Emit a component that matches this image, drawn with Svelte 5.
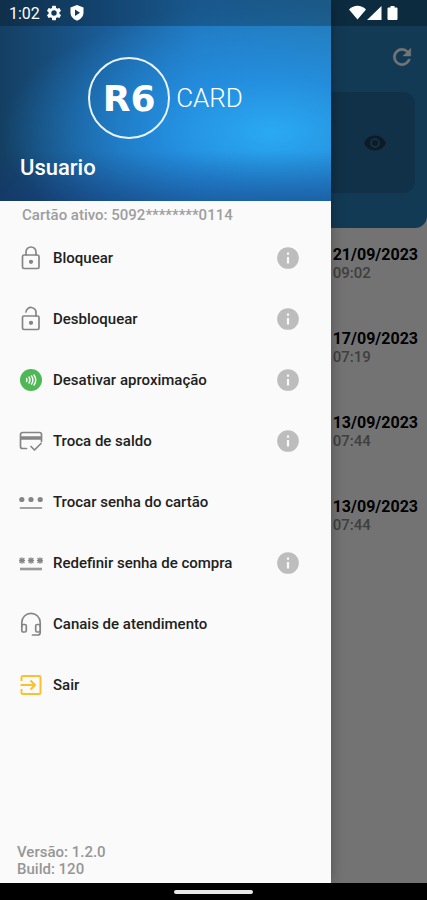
<script>
    const items = [
        { label: 'Bloquear', icon: 'lock', info: true },
        { label: 'Desbloquear', icon: 'unlock', info: true },
        { label: 'Desativar aproximação', icon: 'nfc', info: true },
        { label: 'Troca de saldo', icon: 'card', info: true },
        { label: 'Trocar senha do cartão', icon: 'password', info: false },
        { label: 'Redefinir senha de compra', icon: 'reset', info: true },
        { label: 'Canais de atendimento', icon: 'headset', info: false },
        { label: 'Sair', icon: 'exit', info: false }
    ];

    const history = [
        { date: '21/09/2023', time: '09:02' },
        { date: '17/09/2023', time: '07:19' },
        { date: '13/09/2023', time: '07:44' },
        { date: '13/09/2023', time: '07:44' }
    ];
</script>

<div class="app">
    <div class="stage">
        <main class="home">
            <header class="top">
                <button class="icon-btn refresh" aria-label="Atualizar">
                    <svg width="26" height="26" viewBox="0 0 24 24" fill="#fff">
                        <path d="M17.65 6.35A7.96 7.96 0 0 0 12 4a8 8 0 1 0 7.73 10h-2.08A6 6 0 1 1 12 6c1.66 0 3.14.69 4.22 1.78L13 11h7V4z" stroke="#fff" stroke-width=".5" />
                    </svg>
                </button>
                <div class="balance">
                    <button class="icon-btn" aria-label="Mostrar saldo">
                        <svg width="24" height="24" viewBox="0 0 24 24" fill="#1c3c50">
                            <path d="M12 4.500C7 4.500 2.730 7.610 1 12c1.730 4.390 6 7.500 11 7.500s9.270-3.110 11-7.500c-1.730-4.390-6-7.500-11-7.500zM12 17a5 5 0 1 1 0-10 5 5 0 0 1 0 10zm0-8a3 3 0 1 0 0 6 3 3 0 0 0 0-6z" />
                        </svg>
                    </button>
                </div>
            </header>
            <ul class="history">
                {#each history as row}
                    <li>
                        <div>
                            <strong>{row.date}</strong>
                            <span>{row.time}</span>
                        </div>
                    </li>
                {/each}
            </ul>
        </main>

        <div class="scrim"></div>

        <aside class="drawer">
            <div class="cover">
                <div class="logo">
                    <span class="ring">R6</span>
                    <span class="word">CARD</span>
                </div>
                <h1>Usuario</h1>
            </div>
            <p class="active-card">Cartão ativo: 5092********0114</p>
            <nav>
                {#each items as item}
                    <div class="row">
                        <button class="item">
                            <svg width="24" height="26" viewBox="0 0 24 26" fill="none" stroke="#858585" stroke-width="1.700" stroke-linecap="round" stroke-linejoin="round">
                                {#if item.icon === 'lock'}
                                    <rect x="3.500" y="10" width="16.500" height="13.500" rx="1.500" />
                                    <path d="M7 10V7a5 5 0 0 1 10 0v3" />
                                    <circle cx="12" cy="16.800" r="1.300" fill="#858585" />
                                {:else if item.icon === 'unlock'}
                                    <rect x="3.500" y="10" width="16.500" height="13.500" rx="1.500" />
                                    <path d="M7 6a5 5 0 0 1 10 1v3" />
                                    <circle cx="12" cy="16.800" r="1.300" fill="#858585" />
                                {:else if item.icon === 'nfc'}
                                    <circle cx="12" cy="13" r="11" fill="#4fb856" stroke="none" />
                                    <path d="M7.500 11.500q1 1.500 0 3M10 10q2 3 0 6M12.500 9q2.800 4 0 8M15 8q3.500 5 0 10" stroke="#fff" stroke-width="1.400" />
                                {:else if item.icon === 'card'}
                                    <path d="M7.500 20.500H3.500a2 2 0 0 1-2-2V6.500a2 2 0 0 1 2-2h17a2 2 0 0 1 2 2v7" />
                                    <path d="M2 10h20.500" stroke-width="3.500" stroke-linecap="butt" />
                                    <path d="M12 18.500l3.500 3.500 6.500-6.500" />
                                {:else if item.icon === 'password'}
                                    <g fill="#858585" stroke="none">
                                        <circle cx="2.800" cy="10.500" r="2.600" />
                                        <circle cx="12" cy="10.500" r="2.600" />
                                        <circle cx="21.200" cy="10.500" r="2.600" />
                                    </g>
                                    <path d="M1.500 19h21" />
                                {:else if item.icon === 'reset'}
                                    <path d="M1 8.500l4 4M5 8.500l-4 4M3 7.800v5.400M.5 10.500h5M10 8.500l4 4M14 8.500l-4 4M12 7.800v5.400M9.500 10.500h5M19 8.500l4 4M23 8.500l-4 4M21 7.800v5.400M18.500 10.500h5" stroke-width="1.300" />
                                    <path d="M1 19h22" stroke="#9a9a9a" stroke-width="2.600" stroke-linecap="butt" />
                                {:else if item.icon === 'headset'}
                                    <path d="M2.800 16V11.500a9.200 9.200 0 0 1 18.400 0V16" />
                                    <rect x="2.800" y="13.500" width="4.500" height="7.500" rx="1.500" />
                                    <rect x="16.700" y="13.500" width="4.500" height="7.500" rx="1.500" />
                                    <path d="M21.200 19v2.500a2.500 2.500 0 0 1-2.500 2.500H13.500" />
                                {:else}
                                    <path d="M2.500 9V5.500a1.500 1.500 0 0 1 1.500-1.500h16a1.500 1.500 0 0 1 1.500 1.500v15a1.500 1.500 0 0 1-1.500 1.500H4a1.500 1.500 0 0 1-1.500-1.500V17M1.500 13h14M11.500 8.500l4.500 4.500-4.500 4.500" stroke="#fbc02d" stroke-width="2" stroke-linecap="butt" />
                                {/if}
                            </svg>
                            {item.label}
                        </button>
                        {#if item.info}
                            <button class="icon-btn" aria-label="Informações: {item.label}">
                                <svg width="26" height="26" viewBox="0 0 24 24" fill="#bdbdbd">
                                    <path d="M12 2a10 10 0 1 0 0 20 10 10 0 0 0 0-20zm1 15h-2v-6h2v6zm0-8h-2V7h2v2z" />
                                </svg>
                            </button>
                        {/if}
                    </div>
                {/each}
            </nav>
            <footer>
                Versão: 1.2.0<br />
                Build: 120
            </footer>
        </aside>

        <div class="status">
            <span>1:02</span>
            <svg width="18" height="18" viewBox="0 0 24 24" fill="#fff">
                <path d="M19.140 12.940c.04-.3.06-.61.06-.94s-.02-.64-.07-.94l2.030-1.580a.49.49 0 0 0 .12-.61l-1.920-3.320a.49.49 0 0 0-.59-.22l-2.390.96a7 7 0 0 0-1.620-.94l-.36-2.540a.48.48 0 0 0-.48-.41h-3.840a.48.48 0 0 0-.47.41l-.36 2.540a7 7 0 0 0-1.620.94l-2.390-.96a.48.48 0 0 0-.59.220L2.740 8.870a.48.48 0 0 0 .12.610l2.030 1.580a6 6 0 0 0 0 1.880l-2.030 1.580a.49.49 0 0 0-.12.610l1.920 3.320c.12.220.37.290.59.220l2.390-.96c.5.380 1.030.7 1.620.94l.36 2.540c.05.240.24.410.48.410h3.840c.24 0 .44-.17.47-.41l.36-2.540a7 7 0 0 0 1.620-.94l2.390.96c.22.080.47 0 .59-.22l1.920-3.320a.48.48 0 0 0-.12-.61zM12 15.600a3.600 3.600 0 1 1 0-7.200 3.600 3.600 0 0 1 0 7.200z" />
            </svg>
            <svg class="shield" width="16" height="18" viewBox="0 0 16 18">
                <path d="M8 1l6.500 2.500v5c0 4-2.800 6.800-6.500 8.200-3.700-1.400-6.500-4.200-6.500-8.200v-5z" fill="#fff" />
                <path d="M6 5.500v6.500l5-3.200z" fill="#123a5c" />
            </svg>
            <svg class="signals" width="50" height="16" viewBox="0 0 50 16" fill="#fff">
                <path d="M0 4.500C5-.5 12-.5 17 4.500L8.500 14.500z" />
                <path d="M18 15L32.500 1v14z" />
                <path d="M39.500 2.500h2V1h4v1.500h2a1 1 0 0 1 1 1V14a1 1 0 0 1-1 1h-8a1 1 0 0 1-1-1V3.500a1 1 0 0 1 1-1z" />
            </svg>
        </div>
    </div>
    <div class="navbar"><i></i></div>
</div>

<style>
    :global(body) {
        margin: 0;
    }

    .app {
        display: flex;
        flex-direction: column;
        min-height: 100vh;
        background: #000;
        font-family: Roboto, sans-serif;
    }

    /* every layer shares the same cell */
    .stage {
        flex: 1;
        display: grid;
    }

    .stage > * {
        grid-area: 1 / 1;
    }

    button {
        border: 0;
        padding: 0;
        background: none;
        font: inherit;
        color: inherit;
        cursor: pointer;
    }

    .icon-btn {
        display: flex;
    }

    svg {
        flex: none;
    }

    .home {
        background: #fafafa;
    }

    .top {
        display: flex;
        flex-direction: column;
        gap: 22px;
        padding: 44px 12px 35px;
        background: #287fb9;
        border-radius: 0 0 12px 12px;
    }

    .refresh {
        align-self: flex-end;
    }

    .balance {
        display: flex;
        align-items: center;
        justify-content: flex-end;
        height: 101px;
        padding-right: 28px;
        border-radius: 12px;
        background: #246b9e;
    }

    .history {
        list-style: none;
        margin: 0;
        padding: 17px 9px 0;
    }

    .history li {
        display: flex;
        justify-content: flex-end;
        height: 84px;
    }

    .history strong,
    .history span {
        display: block;
        font-size: 16px;
        line-height: 19px;
    }

    .history span {
        font-size: 15px;
        font-weight: 500;
        color: #8a8a8a;
    }

    .scrim {
        background: rgba(0, 0, 0, 0.54);
    }

    .drawer {
        display: flex;
        flex-direction: column;
        margin-right: 96px;
        background: #fafafa;
        box-shadow: 0 0 12px rgba(0, 0, 0, 0.3);
    }

    .cover {
        display: flex;
        flex-direction: column;
        justify-content: space-between;
        padding: 57px 20px 20px;
        height: 201px;
        box-sizing: border-box;
        background:
            linear-gradient(180deg, transparent 75%, rgba(20, 50, 110, 0.45)),
            radial-gradient(ellipse at 82% 66%, rgba(43, 172, 246, 0.95) 0%, rgba(36, 150, 235, 0.7) 30%, transparent 70%),
            linear-gradient(90deg, #143f62 0%, #1a5a94 30%, #2176bd 60%, #2478b4 100%);
        color: #fff;
    }

    .logo {
        display: flex;
        align-items: center;
        justify-content: center;
        gap: 6px;
    }

    .ring {
        display: flex;
        align-items: center;
        justify-content: center;
        box-sizing: border-box;
        width: 82px;
        height: 82px;
        border: 2px solid #e8f3fc;
        border-radius: 50%;
        font: bold 36px 'DejaVu Sans', sans-serif;
    }

    .word {
        font-size: 26px;
        font-weight: 300;
    }

    h1 {
        margin: 0;
        font-size: 22px;
        line-height: 26px;
        font-weight: 500;
    }

    .active-card {
        margin: 0;
        padding: 4px 22px 0;
        font-size: 15px;
        line-height: 20px;
        font-weight: 500;
        color: #9e9e9e;
    }

    nav {
        margin-top: 2px;
    }

    .row {
        display: flex;
        align-items: center;
        height: 61px;
        padding: 0 30px 0 19px;
    }

    .item {
        flex: 1;
        display: flex;
        align-items: center;
        gap: 10px;
        font-size: 15px;
        font-weight: 500;
        color: #212121;
        text-align: left;
    }

    footer {
        margin-top: auto;
        padding: 16px 17px 5px;
        font-size: 15px;
        line-height: 17px;
        font-weight: 500;
        color: #969696;
    }

    .status {
        display: flex;
        align-items: center;
        align-self: start;
        height: 26px;
        padding: 0 28px 0 9px;
        background: rgba(0, 0, 0, 0.25);
        color: #fff;
        font-size: 16px;
    }

    .status span {
        margin-right: 5px;
    }

    .shield {
        margin-left: 6px;
    }

    .signals {
        margin-left: auto;
    }

    .navbar {
        display: flex;
        align-items: center;
        justify-content: center;
        height: 17px;
    }

    .navbar i {
        width: 79px;
        height: 4px;
        border-radius: 2px;
        background: #e8e8e8;
    }
</style>
